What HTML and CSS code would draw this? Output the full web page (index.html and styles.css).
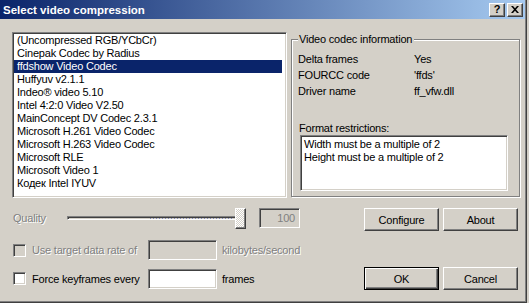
FILE: index.html
```html
<!DOCTYPE html>
<html lang="en">

<head>
    <meta charset="UTF-8">
    <title>Select video compression</title>
    <link rel="stylesheet" href="styles.css">
</head>

<body>
    <div class="window">
        <div class="titlebar">
            <span class="title">Select video compression</span>
            <div class="caption-buttons">
                <span class="cap-btn">?</span>
                <span class="cap-btn close">
                    <svg width="8" height="7" viewBox="0 0 8 7">
                        <path d="M0 0h2l2 2.2 2-2.2h2l-3 3.5 3 3.5h-2l-2-2.2-2 2.2h-2l3-3.5z" fill="#000" />
                    </svg>
                </span>
            </div>
        </div>

        <div class="client">
            <div class="top">
                <ul class="listbox">
                    <li>(Uncompressed RGB/YCbCr)</li>
                    <li>Cinepak Codec by Radius</li>
                    <li class="selected">ffdshow Video Codec</li>
                    <li>Huffyuv v2.1.1</li>
                    <li>Indeo® video 5.10</li>
                    <li>Intel 4:2:0 Video V2.50</li>
                    <li>MainConcept DV Codec 2.3.1</li>
                    <li>Microsoft H.261 Video Codec</li>
                    <li>Microsoft H.263 Video Codec</li>
                    <li>Microsoft RLE</li>
                    <li>Microsoft Video 1</li>
                    <li>Кодек Intel IYUV</li>
                </ul>

                <div class="group">
                    <span class="group-title">Video codec information</span>
                    <dl class="info">
                        <div class="info-row"><dt>Delta frames</dt><dd>Yes</dd></div>
                        <div class="info-row"><dt>FOURCC code</dt><dd>'ffds'</dd></div>
                        <div class="info-row"><dt>Driver name</dt><dd>ff_vfw.dll</dd></div>
                    </dl>
                    <div class="restrict-label">Format restrictions:</div>
                    <div class="restrict-box">Width must be a multiple of 2<br>Height must be a multiple of 2</div>
                </div>
            </div>

            <div class="row row-quality">
                <div class="row-left">
                    <span class="label disabled quality-label">Quality</span>
                    <div class="slider">
                        <div class="track"></div>
                        <div class="ticks"></div>
                        <div class="thumb"></div>
                    </div>
                    <div class="edit edit-disabled quality-edit">100</div>
                </div>
                <div class="btns">
                    <button class="btn">Configure</button>
                    <button class="btn">About</button>
                </div>
            </div>

            <div class="row row-rate">
                <div class="row-left">
                    <label class="check-field">
                        <span class="checkbox checkbox-disabled"></span>
                        <span class="label disabled">Use target data rate of</span>
                    </label>
                    <div class="edit edit-disabled field-edit"></div>
                    <span class="label disabled unit">kilobytes/second</span>
                </div>
            </div>

            <div class="row row-keyframes">
                <div class="row-left">
                    <label class="check-field">
                        <span class="checkbox"></span>
                        <span class="label">Force keyframes every</span>
                    </label>
                    <div class="edit field-edit"></div>
                    <span class="label unit">frames</span>
                </div>
                <div class="btns">
                    <button class="btn default">OK</button>
                    <button class="btn">Cancel</button>
                </div>
            </div>
        </div>
    </div>
</body>

</html>
```

FILE: styles.css
```css
body {
    margin: 0;
    background-color: #d4d0c8;
    font-family: "Liberation Sans", Arial, sans-serif;
    font-size: 11px;
    letter-spacing: -0.2px;
    color: #000;
}

.window {
    width: 527px;
    height: 303px;
    box-sizing: border-box;
    background-color: #d4d0c8;
    border-right: 1px solid #404040;
    border-bottom: 1px solid #404040;
    box-shadow: inset -1px -1px #808080;
}

/* title bar */
.titlebar {
    height: 19px;
    margin-right: 1px;
    display: flex;
    align-items: center;
    justify-content: space-between;
    background: linear-gradient(to right, #0a246a, #a6caf0);
}

.title {
    color: white;
    font-weight: bold;
    font-size: 11.5px;
    letter-spacing: 0;
    padding-left: 3px;
}

.caption-buttons {
    display: flex;
    gap: 2px;
    margin-right: 2px;
}

.cap-btn {
    width: 16px;
    height: 14px;
    box-sizing: border-box;
    display: flex;
    align-items: center;
    justify-content: center;
    background-color: #d4d0c8;
    border: 1px solid;
    border-color: #fff #404040 #404040 #fff;
    box-shadow: inset -1px -1px #808080;
    font-weight: bold;
    font-size: 11px;
    line-height: 1;
}

/* client area */
.client {
    padding: 13px 0 0 12px;
}

.top {
    display: flex;
    align-items: flex-start;
    gap: 4px;
}

.listbox {
    width: 275px;
    height: 166px;
    box-sizing: border-box;
    margin: 0;
    padding: 1px;
    list-style: none;
    background: white;
    border: 1px solid;
    border-color: #808080 #fff #fff #808080;
    box-shadow: inset 1px 1px #404040, inset -1px -1px #d4d0c8;
}

.listbox li {
    height: 13px;
    line-height: 13px;
    padding-left: 3px;
    margin-right: 3px;
    white-space: nowrap;
}

.listbox li.selected {
    background-color: #0a246a;
    color: white;
}

/* group box */
.group {
    position: relative;
    width: 229px;
    height: 158px;
    box-sizing: border-box;
    margin-top: 7px;
    padding: 11px 6px 0 6px;
    border: 1px solid #808080;
    box-shadow: inset 1px 1px #fff, 1px 1px #fff;
}

.group-title {
    position: absolute;
    top: -7px;
    left: 6px;
    padding: 0 2px 0 1px;
    line-height: 13px;
    background-color: #d4d0c8;
}

.info {
    margin: 0;
}

.info-row {
    display: flex;
    height: 16px;
    line-height: 16px;
}

.info dt {
    width: 116px;
}

.info dd {
    margin: 0;
}

.restrict-label {
    margin: 22px 0 0 1px;
    line-height: 14px;
}

.restrict-box {
    width: 208px;
    height: 56px;
    box-sizing: border-box;
    margin-left: 2px;
    padding: 2px 3px;
    line-height: 13px;
    background: white;
    border: 1px solid;
    border-color: #808080 #fff #fff #808080;
    box-shadow: inset 1px 1px #404040, inset -1px -1px #d4d0c8;
}

/* bottom rows */
.row {
    display: flex;
    align-items: center;
}

.row-left {
    width: 351px;
    padding-left: 1px;
    display: flex;
    align-items: center;
}

.row-quality {
    margin-top: 10px;
    height: 23px;
    align-items: flex-start;
}

.row-quality .row-left {
    align-items: flex-start;
}

.row-rate {
    margin-top: 9px;
    height: 20px;
}

.row-keyframes {
    margin-top: 7px;
    height: 23px;
}

.label {
    white-space: nowrap;
}

.disabled {
    color: #808080;
    text-shadow: 1px 1px 0 #fff;
}

.quality-label {
    width: 54px;
    line-height: 21px;
}

.slider {
    position: relative;
    width: 178px;
    height: 21px;
}

.track {
    position: absolute;
    left: 0;
    top: 8px;
    width: 170px;
    height: 4px;
    box-sizing: border-box;
    border: 1px solid;
    border-color: #808080 #fff #fff #808080;
    box-shadow: inset 1px 1px #404040, inset -1px -1px #d4d0c8;
}

.ticks {
    position: absolute;
    left: 83px;
    top: 10px;
    width: 83px;
    height: 1px;
    background: repeating-linear-gradient(to right, #8088b8 0 1px, transparent 1px 3px);
}

.thumb {
    position: absolute;
    left: 168px;
    top: 0;
    width: 11px;
    height: 21px;
    box-sizing: border-box;
    border: 1px solid;
    border-color: #fff #404040 #404040 #fff;
    box-shadow: inset -1px -1px #808080;
    background: repeating-conic-gradient(#fff 0 25%, #d4d0c8 0 50%) 0 0 / 2px 2px;
}

.edit {
    box-sizing: border-box;
    height: 20px;
    background: white;
    border: 1px solid;
    border-color: #808080 #fff #fff #808080;
    box-shadow: inset 1px 1px #404040, inset -1px -1px #d4d0c8;
}

.edit-disabled {
    background-color: #d4d0c8;
}

.quality-edit {
    width: 41px;
    margin-left: 14px;
    padding-right: 4px;
    text-align: right;
    line-height: 18px;
    color: #808080;
}

.check-field {
    width: 135px;
    display: flex;
    align-items: center;
    gap: 6px;
}

.checkbox {
    width: 13px;
    height: 13px;
    box-sizing: border-box;
    background: white;
    border: 1px solid;
    border-color: #808080 #fff #fff #808080;
    box-shadow: inset 1px 1px #404040, inset -1px -1px #d4d0c8;
}

.checkbox-disabled {
    background-color: #d4d0c8;
}

.field-edit {
    width: 69px;
}

.unit {
    margin-left: 5px;
}

.btns {
    display: flex;
    gap: 4px;
}

.btn {
    width: 75px;
    height: 23px;
    box-sizing: border-box;
    padding: 0;
    font-family: inherit;
    font-size: 11px;
    letter-spacing: inherit;
    color: #000;
    background-color: #d4d0c8;
    border: 1px solid;
    border-color: #fff #404040 #404040 #fff;
    box-shadow: inset -1px -1px #808080;
}

.btn.default {
    border-color: #000;
    box-shadow: inset 1px 1px #fff, inset -1px -1px #404040, inset -2px -2px #808080;
}
```
